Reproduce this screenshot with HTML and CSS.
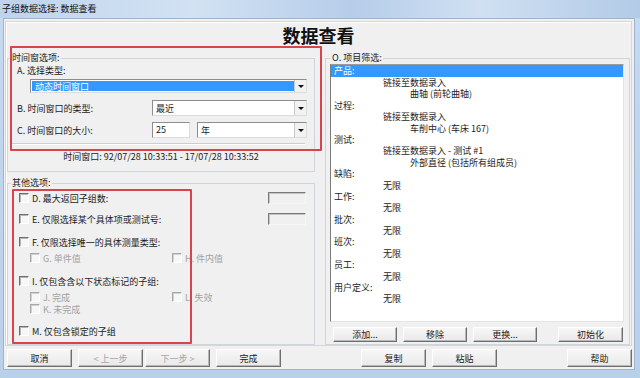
FILE: index.html
```html
<!DOCTYPE html>
<html lang="zh">
<head>
<meta charset="utf-8">
<title>子组数据选择: 数据查看</title>
<link rel="stylesheet" href="styles.css">
</head>
<body>
<div class="titlebar">子组数据选择: 数据查看</div>
<div class="window">
  <div class="panel">
    <div class="heading">数据查看</div>
    <div class="cols">
      <div class="left">
        <fieldset class="group g1">
          <legend>时间窗选项:</legend>
          <div class="row-a">A. 选择类型:</div>
          <div class="combo combo-a"><span class="combo-text sel">动态时间窗口</span><span class="combo-btn"></span></div>
          <div class="frow row-b">
            <span class="flbl">B. 时间窗口的类型:</span>
            <div class="combo combo-b"><span class="combo-text">最近</span><span class="combo-btn"></span></div>
          </div>
          <div class="frow row-c">
            <span class="flbl">C. 时间窗口的大小:</span>
            <div class="edit">25</div>
            <div class="combo combo-c"><span class="combo-text">年</span><span class="combo-btn"></span></div>
          </div>
          <div class="sep"></div>
          <div class="timewin">时间窗口: 92/07/28 10:33:51 - 17/07/28 10:33:52</div>
        </fieldset>
        <fieldset class="group g2">
          <legend>其他选项:</legend>
          <div class="crow r-d"><span class="cb"></span><span>D. 最大返回子组数:</span><span class="edit-off"></span></div>
          <div class="crow r-e"><span class="cb"></span><span>E. 仅限选择某个具体项或测试号:</span><span class="edit-off"></span></div>
          <div class="crow r-f"><span class="cb"></span><span>F. 仅限选择唯一的具体测量类型:</span></div>
          <div class="crow sub r-g">
            <span class="cell"><span class="cb off"></span><span class="dis">G. 单件值</span></span>
            <span class="cell"><span class="cb off"></span><span class="dis">H. 件内值</span></span>
          </div>
          <div class="crow r-i"><span class="cb"></span><span>I. 仅包含含以下状态标记的子组:</span></div>
          <div class="crow sub r-j">
            <span class="cell"><span class="cb off"></span><span class="dis">J. 完成</span></span>
            <span class="cell"><span class="cb off"></span><span class="dis">L. 失效</span></span>
          </div>
          <div class="crow sub r-k">
            <span class="cell"><span class="cb off"></span><span class="dis">K. 未完成</span></span>
          </div>
          <div class="crow r-m"><span class="cb"></span><span>M. 仅包含锁定的子组</span></div>
        </fieldset>
      </div>
      <fieldset class="group right">
        <legend>O. 项目筛选:</legend>
        <div class="list">
          <div class="li l0 hl">产品:</div>
          <div class="li l1">链接至数据录入</div>
          <div class="li l2">曲轴 (前轮曲轴)</div>
          <div class="li l0">过程:</div>
          <div class="li l1">链接至数据录入</div>
          <div class="li l2">车削中心 (车床 167)</div>
          <div class="li l0">测试:</div>
          <div class="li l1">链接至数据录入 - 测试 #1</div>
          <div class="li l2">外部直径 (包括所有组成员)</div>
          <div class="li l0">缺陷:</div>
          <div class="li l1">无限</div>
          <div class="li l0">工作:</div>
          <div class="li l1">无限</div>
          <div class="li l0">批次:</div>
          <div class="li l1">无限</div>
          <div class="li l0">班次:</div>
          <div class="li l1">无限</div>
          <div class="li l0">员工:</div>
          <div class="li l1">无限</div>
          <div class="li l0">用户定义:</div>
          <div class="li l1">无限</div>
        </div>
        <div class="btnrow">
          <div class="btn">添加...</div>
          <div class="btn">移除</div>
          <div class="btn">更换...</div>
          <div class="btn push">初始化</div>
        </div>
      </fieldset>
    </div>
  </div>
  <div class="bottom">
    <div class="btn b-cancel">取消</div>
    <div class="btn b-prev dis">&lt; 上一步</div>
    <div class="btn b-next dis">下一步 &gt;</div>
    <div class="btn b-done">完成</div>
    <div class="btn b-copy">复制</div>
    <div class="btn b-paste">粘贴</div>
    <div class="btn b-help">帮助</div>
  </div>
</div>
<div class="mark mark1"></div>
<div class="mark mark2"></div>
</body>
</html>
```

FILE: styles.css
```css
* { box-sizing: border-box; }
html, body { margin: 0; padding: 0; }
body {
  width: 640px;
  height: 378px;
  overflow: hidden;
  position: relative;
  background: linear-gradient(180deg, #c6daf0 0%, #b9d0ea 100%);
  font-family: "Noto Sans CJK SC", "Noto Sans", sans-serif;
  font-size: 9px;
  color: #1c1c1c;
}
.titlebar {
  height: 18px;
  line-height: 17px;
  padding-left: 2px;
  color: #111;
  background: linear-gradient(90deg, #bed4ec 0%, #d2e2f3 30%, #b6cde9 55%, #cfe0f2 75%, #b3cbe7 100%);
}
.window {
  margin-left: 3px;
  width: 632px;
  height: 352px;
  background: #f0f0f0;
  border: 1px solid #9fb5cf;
}
.panel {
  margin: 2px 0 0 1px;
  width: 627px;
  height: 325px;
  border: 1px solid #d4d7da;
  box-shadow: inset 1px 1px 0 #fff;
}
.heading {
  height: 30px;
  line-height: 26px;
  text-align: center;
  font-size: 18px;
  font-weight: bold;
  color: #111;
}
.cols {
  display: flex;
  gap: 10px;
  padding-left: 1px;
  height: 293px;
}
.left {
  width: 308px;
  display: flex;
  flex-direction: column;
}
.group {
  margin: 0;
  padding: 0;
  min-width: 0;
  border: 1px solid #cfd5db;
}
.group legend {
  padding: 0 1px;
  margin-left: 3px;
  line-height: 12px;
  font-size: 9px;
}
.g1 { padding-bottom: 8px; }
.row-a {
  height: 14px;
  line-height: 14px;
  padding-left: 9px;
}
.combo {
  display: flex;
  background: #fff;
  border: 1px solid;
  border-color: #8d8d8d #dcdcdc #dcdcdc #8d8d8d;
}
.combo-text {
  flex: 1;
  padding-left: 3px;
  display: flex;
  align-items: center;
}
.combo-text.sel {
  background: #3399ff;
  color: #fff;
  margin: 1px 0 1px 1px;
}
.combo-btn {
  width: 12px;
  background: #f2f2f2;
  border-left: 1px solid #c8c8c8;
  display: flex;
  align-items: center;
  justify-content: center;
}
.combo-btn::after {
  content: "";
  border-left: 3px solid transparent;
  border-right: 3px solid transparent;
  border-top: 3px solid #111;
  margin-top: 1px;
}
.combo-a {
  margin: 1px 0 0 22px;
  width: 277px;
  height: 14px;
}
.frow {
  display: flex;
  align-items: center;
  height: 16px;
  padding-left: 9px;
}
.flbl { width: 135px; }
.row-b { margin-top: 7px; }
.row-c { margin-top: 6px; }
.combo-b { width: 155px; height: 16px; }
.edit {
  width: 38px;
  height: 16px;
  background: #fff;
  border: 1px solid;
  border-color: #8d8d8d #dcdcdc #dcdcdc #8d8d8d;
  padding-left: 3px;
  line-height: 13px;
}
.combo-c { width: 110px; height: 16px; margin-left: 7px; }
.sep {
  margin: 5px 9px 0 4px;
  height: 2px;
  border-top: 1px solid #c9cfd4;
  border-bottom: 1px solid #fff;
}
.timewin {
  margin-top: 6px;
  line-height: 12px;
  text-align: center;
}
.g2 {
  margin-top: 5px;
  padding-bottom: 4px;
  flex: 1;
}
.crow {
  display: flex;
  align-items: center;
  height: 14px;
  padding-left: 11px;
}
.crow.sub { padding-left: 22px; height: 12px; }
.cb {
  width: 10px;
  height: 10px;
  margin-right: 3px;
  flex: none;
  background: #f7f7f7;
  border: 1px solid;
  border-color: #6f6f6f #ffffff #ffffff #6f6f6f;
  box-shadow: inset 1px 1px 0 #b5b5b5;
}
.cb.off {
  border-color: #a8a8a8 #ffffff #ffffff #a8a8a8;
  box-shadow: inset 1px 1px 0 #d2d2d2;
}
.dis { color: #a2a2a2; }
.cell { display: flex; align-items: center; width: 147px; }
.edit-off {
  margin-left: auto;
  margin-right: 8px;
  width: 38px;
  height: 12px;
  border: 1px solid;
  border-color: #7a7a7a #f6f6f6 #f6f6f6 #7a7a7a;
  box-shadow: inset 1px 1px 0 #c4c4c4;
}
.r-d { margin-top: 2px; }
.r-e { margin-top: 7px; }
.r-f { margin-top: 9px; }
.r-g { margin-top: 3px; height: 14px; }
.r-i { margin-top: 10px; }
.r-j { margin-top: 3px; }
.r-k { margin-top: 0; }
.r-m { margin-top: 9px; }
.right {
  width: 305px;
  padding-bottom: 1px;
}
.right legend { margin-left: 5px; }
.list {
  margin-left: 4px;
  width: 294px;
  height: 258px;
  background: #fff;
  border: 1px solid;
  border-color: #9a9a9a #e4e4e4 #e4e4e4 #7c7c7c;
  overflow: hidden;
}
.li {
  height: 11.4px;
  line-height: 11.4px;
  white-space: nowrap;
  padding-left: 3px;
}
.li.hl {
  height: 12px;
  line-height: 12px;
  background: #3399ff;
  color: #fff;
}
.li.l1 { padding-left: 52px; }
.li.l2 { padding-left: 79px; }
.btnrow {
  display: flex;
  gap: 6px;
  margin-top: 5px;
  height: 15px;
  padding: 0 6px 0 7px;
}
.btn {
  width: 65px;
  height: 100%;
  display: flex;
  align-items: center;
  justify-content: center;
  background: linear-gradient(180deg, #f7f7f7, #e9e9e9);
  border: 1px solid;
  border-color: #ffffff #6e6e6e #6e6e6e #ffffff;
  box-shadow: inset -1px -1px 0 #b8b8b8;
}
.btn.dis { color: #a5a5a5; }
.btnrow .btn { width: 64px; }
.btn.push { margin-left: auto; width: 65px; }
.bottom {
  display: flex;
  margin-top: 3px;
  height: 18px;
  padding-left: 3px;
}
.b-prev { margin-left: 6px; }
.b-next { margin-left: 2px; }
.b-done { margin-left: 6px; }
.b-copy { margin-left: 80px; }
.b-paste { margin-left: 6px; }
.b-help { margin-left: auto; margin-right: 2px; }
.mark {
  position: absolute;
  border: 2px solid #d8434c;
  border-radius: 1px;
}
.mark1 { left: 10px; top: 46px; width: 312px; height: 105px; }
.mark2 { left: 12px; top: 189px; width: 180px; height: 155px; }
```
